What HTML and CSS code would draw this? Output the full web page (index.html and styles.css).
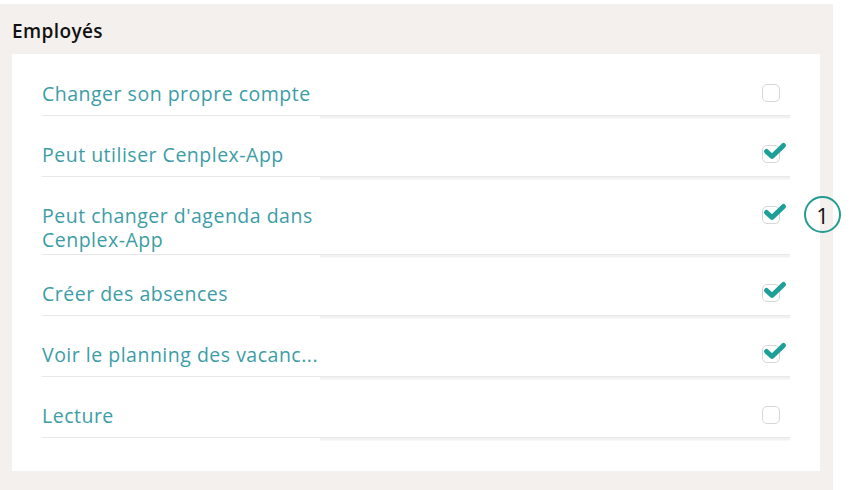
FILE: index.html
```html
<!DOCTYPE html>
<html lang="fr">
<head>
<meta charset="utf-8">
<title>Employés</title>
<link rel="stylesheet" href="styles.css">
</head>
<body>
<div class="panel">
  <div class="title">Employés</div>
  <div class="card">
    <div class="row">
      <div class="row-main"><span class="label">Changer son propre compte</span><span class="cb"></span></div>
      <div class="rule"><div class="rule-l"></div><div class="rule-r"></div></div>
    </div>
    <div class="row">
      <div class="row-main"><span class="label">Peut utiliser Cenplex-App</span><span class="cb"><svg class="check" viewBox="0 0 22 16"><path d="M2.5 8.5 L8 13.5 L19.5 2.5"/></svg></span></div>
      <div class="rule"><div class="rule-l"></div><div class="rule-r"></div></div>
    </div>
    <div class="row">
      <div class="row-main"><span class="label">Peut changer d'agenda dans<br>Cenplex-App</span><span class="cb"><svg class="check" viewBox="0 0 22 16"><path d="M2.5 8.5 L8 13.5 L19.5 2.5"/></svg><span class="badge">1</span></span></div>
      <div class="rule"><div class="rule-l"></div><div class="rule-r"></div></div>
    </div>
    <div class="row">
      <div class="row-main"><span class="label">Créer des absences</span><span class="cb"><svg class="check" viewBox="0 0 22 16"><path d="M2.5 8.5 L8 13.5 L19.5 2.5"/></svg></span></div>
      <div class="rule"><div class="rule-l"></div><div class="rule-r"></div></div>
    </div>
    <div class="row">
      <div class="row-main"><span class="label">Voir le planning des vacanc...</span><span class="cb"><svg class="check" viewBox="0 0 22 16"><path d="M2.5 8.5 L8 13.5 L19.5 2.5"/></svg></span></div>
      <div class="rule"><div class="rule-l"></div><div class="rule-r"></div></div>
    </div>
    <div class="row">
      <div class="row-main"><span class="label">Lecture</span><span class="cb"></span></div>
      <div class="rule"><div class="rule-l"></div><div class="rule-r"></div></div>
    </div>
  </div>
</div>
</body>
</html>
```
FILE: styles.css
```css
html, body {
  margin: 0;
  padding: 0;
  background: #ffffff;
}
body {
  font-family: "Open Sans", "Noto Sans", sans-serif;
}
.panel {
  margin-top: 4px;
  width: 821px;
  height: 470px;
  padding: 16px 0 0 12px;
  background: #f3f0ed;
}
.title {
  font-size: 19px;
  font-weight: 600;
  line-height: 22px;
  color: #111111;
  margin-bottom: 12px;
  letter-spacing: 0.4px;
}
.card {
  width: 748px;
  background: #ffffff;
  padding: 4px 30px 30px 30px;
}
.row {
  padding-top: 24px;
}
.row-main {
  display: flex;
  justify-content: space-between;
  align-items: flex-start;
  min-height: 31px;
  padding-bottom: 2px;
}
.label {
  font-size: 19.5px;
  line-height: 24px;
  color: #3c9da6;
  letter-spacing: 0.5px;
}
.cb {
  position: relative;
  width: 16px;
  height: 16px;
  margin-top: 2px;
  margin-right: 10px;
  border: 1.5px solid #d6d6d6;
  border-radius: 5px;
  background: #ffffff;
}
.check {
  position: absolute;
  left: 1px;
  top: -3px;
  width: 22px;
  height: 16px;
  overflow: visible;
}
.check path {
  fill: none;
  stroke: #1e9f97;
  stroke-width: 5;
  stroke-linecap: round;
  stroke-linejoin: round;
}
.badge {
  position: absolute;
  left: 41px;
  top: -11px;
  width: 33px;
  height: 33px;
  border: 2px solid #259c92;
  border-radius: 50%;
  background: transparent;
  display: flex;
  align-items: center;
  justify-content: center;
  font-family: "Open Sans", "Noto Sans", sans-serif;
  font-size: 22px;
  color: #111111;
  line-height: 1;
}
.rule {
  display: flex;
  height: 4px;
}
.rule-l {
  width: 278px;
  border-top: 1.5px solid #e8e8e8;
}
.rule-r {
  flex: 1;
  border-top: 1.5px solid #e8e8e8;
  background: linear-gradient(#f2f2f2, #f2f2f2) top / 100% 2.5px no-repeat;
}
```
